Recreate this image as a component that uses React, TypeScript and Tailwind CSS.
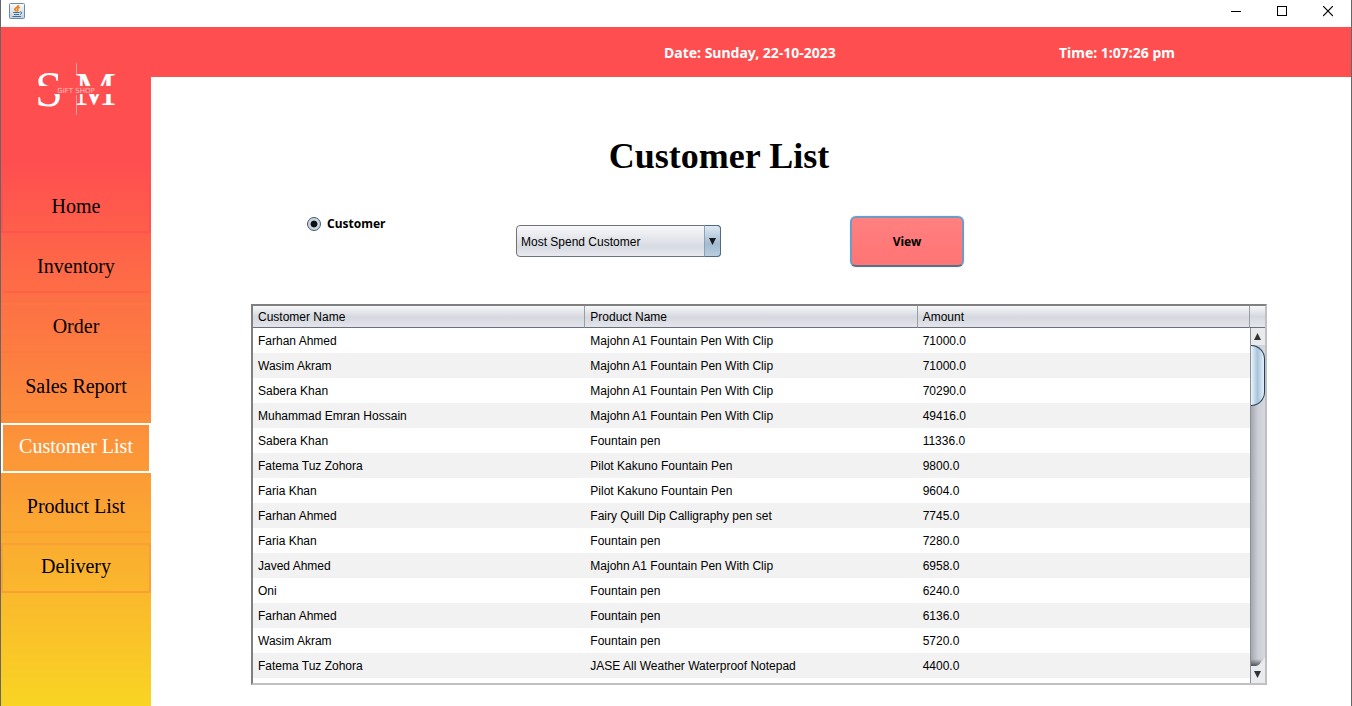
import React from "react";

const NAV = [
  { label: "Home", border: "border-[#ff4e50]/70 border-t-transparent" },
  { label: "Inventory", border: "border-transparent border-b-[#ff6249]" },
  { label: "Order", border: "border-transparent border-t-[#ff7542] border-b-[#fe7841]" },
  { label: "Sales Report", border: "border-transparent border-b-[#fd863c]" },
  { label: "Customer List", border: "border-white", active: true },
  { label: "Product List", border: "border-transparent border-b-[#fc9f33]" },
  { label: "Delivery", border: "border-[#f8a033]" },
];

const ROWS: [string, string, string][] = [
  ["Farhan Ahmed", "Majohn A1 Fountain Pen With Clip", "71000.0"],
  ["Wasim Akram", "Majohn A1 Fountain Pen With Clip", "71000.0"],
  ["Sabera Khan", "Majohn A1 Fountain Pen With Clip", "70290.0"],
  ["Muhammad Emran Hossain", "Majohn A1 Fountain Pen With Clip", "49416.0"],
  ["Sabera Khan", "Fountain pen", "11336.0"],
  ["Fatema Tuz Zohora", "Pilot Kakuno Fountain Pen", "9800.0"],
  ["Faria Khan", "Pilot Kakuno Fountain Pen", "9604.0"],
  ["Farhan Ahmed", "Fairy Quill Dip Calligraphy pen set", "7745.0"],
  ["Faria Khan", "Fountain pen", "7280.0"],
  ["Javed Ahmed", "Majohn A1 Fountain Pen With Clip", "6958.0"],
  ["Oni", "Fountain pen", "6240.0"],
  ["Farhan Ahmed", "Fountain pen", "6136.0"],
  ["Wasim Akram", "Fountain pen", "5720.0"],
  ["Fatema Tuz Zohora", "JASE All Weather Waterproof Notepad", "4400.0"],
];

function JavaIcon() {
  return (
    <svg width="16" height="16" viewBox="0 0 16 16" aria-hidden="true">
      <defs>
        <linearGradient id="tile" x1="0" y1="0" x2="0" y2="1">
          <stop offset="0" stopColor="#fafcfd" />
          <stop offset="1" stopColor="#c3d2de" />
        </linearGradient>
      </defs>
      <rect x="0.5" y="0.5" width="15" height="15" rx="1" fill="url(#tile)" stroke="#6c8ba5" />
      <path d="M9.500 2C9.800 4 5.600 4.600 5.800 6.300C5.900 7.300 7.200 7.600 7.200 8.600M10.800 4.300C8.500 5 8 5.800 8.600 6.600C9 7.300 8.700 8 8.200 8.500" fill="none" stroke="#ee7f1b" strokeWidth="1.600" />
      <path d="M4.200 9.500H10.500M5 11.500H10M3.500 13.500H12M11 9C13.500 8.400 13.200 11 10.800 11.500" fill="none" stroke="#3f6d94" strokeWidth="1" />
    </svg>
  );
}

function Logo() {
  return (
    <svg width="84" height="56" viewBox="0 0 84 56" role="img" aria-label="SM Gift Shop">
      <g fill="#fff" fontFamily="'Liberation Serif', serif">
        <text x="1" y="44" fontSize="50">S</text>
        <text x="41" y="43" fontSize="46">M</text>
      </g>
      <rect x="0" y="24" width="84" height="8" fill="#ff4e50" />
      <path d="M42.500 1V12M42.500 33V53" stroke="#ff9a9b" strokeWidth="1" />
      <text x="42" y="31" fontSize="7" textAnchor="middle" fill="#ffc4c5" fontFamily="'DejaVu Sans', sans-serif">
        GIFT SHOP
      </text>
    </svg>
  );
}

function TitleBar() {
  const control = "flex h-[23px] w-[46px] items-center justify-center";
  return (
    <header className="flex h-[27px] items-start justify-between bg-white">
      <div className="pt-[3px] pl-2">
        <JavaIcon />
      </div>
      <div className="flex">
        <button type="button" aria-label="Minimize" className={control}>
          <svg width="10" height="11" viewBox="0 0 10 11"><path d="M0 5.500H10" stroke="#000" /></svg>
        </button>
        <button type="button" aria-label="Maximize" className={control}>
          <svg width="10" height="11" viewBox="0 0 10 11"><rect x="0.5" y="0.5" width="9" height="9" fill="none" stroke="#000" /></svg>
        </button>
        <button type="button" aria-label="Close" className={control}>
          <svg width="10" height="11" viewBox="0 0 10 11"><path d="M0 0L10 10M10 0L0 10" stroke="#000" strokeWidth="1.200" /></svg>
        </button>
      </div>
    </header>
  );
}

function Sidebar() {
  return (
    <aside className="flex w-[150px] shrink-0 flex-col bg-linear-to-b/srgb from-[#ff4e50] from-20% to-[#f9d423]">
      <div className="flex h-[156px] items-start justify-center pt-[35px]">
        <Logo />
      </div>
      <nav className="flex flex-col gap-[10px]">
        {NAV.map((item) => (
          <a
            key={item.label}
            href="#"
            aria-current={item.active ? "page" : undefined}
            className={`flex h-[50px] items-center justify-center border-2 pb-1 font-['Liberation_Serif',serif] text-xl leading-6 ${item.border} ${item.active ? "text-white" : "text-black"}`}
          >
            {item.label}
          </a>
        ))}
      </nav>
    </aside>
  );
}

function ScrollBar() {
  return (
    <div aria-hidden="true" className="flex w-[15px] shrink-0 flex-col">
      <div className="h-[22px] shrink-0 border-b border-[#6a7080] bg-linear-to-b from-[#f7f8fa] via-[#d5d8df] to-[#e4e6ec]" />
      <div className="flex min-h-0 flex-1 flex-col border-l border-[#8b8e94] bg-linear-to-r from-[#a5a8ae] via-[#cdcfd6] to-[#d6d8df]">
        <svg className="h-[17px] w-full shrink-0 bg-[#e9eaee]" viewBox="0 0 14 17">
          <path d="M3 12H10L6.500 5Z" fill="#333" />
        </svg>
        <div className="h-[61px] shrink-0 rounded-r-[14px] border border-l-0 border-[#24405a] bg-linear-to-r from-[#edf4fa] via-[#a9c4db] to-[#e2f1fb]" />
        <div className="flex-1" />
        <svg className="h-[26px] w-full shrink-0" viewBox="0 0 14 26">
          <defs>
            <linearGradient id="shade" x1="0" y1="0" x2="0" y2="1">
              <stop offset="0" stopColor="#50545a" stopOpacity="0" />
              <stop offset="1" stopColor="#50545a" />
            </linearGradient>
          </defs>
          <path d="M0 2H11L8 9H0Z" fill="url(#shade)" />
          <path d="M0 9H5Q10 8 14 0V26H0Z" fill="#e9ebee" />
          <path d="M3 14H10L6.500 21Z" fill="#333" />
        </svg>
      </div>
    </div>
  );
}

function CustomerTable() {
  const th = "border-r border-b border-r-[#9a9da4] border-b-[#6a7080] pl-[5px] text-left font-normal";
  return (
    <div className="flex min-h-0 flex-1 overflow-hidden border-2 border-[#808080] border-r-[#c0c0c0] border-b-[#c0c0c0] bg-white">
      <div className="min-w-0 flex-1 overflow-hidden">
        <table className="w-full table-fixed border-separate border-spacing-0 font-['Liberation_Sans',Arial,sans-serif] text-xs text-black">
          <thead>
            <tr className="h-[22px] bg-linear-to-b from-[#f7f8fa] via-[#d5d8df] to-[#e4e6ec]">
              <th className={th}>Customer Name</th>
              <th className={th}>Product Name</th>
              <th className={th}>Amount</th>
            </tr>
          </thead>
          <tbody>
            {ROWS.map((row, i) => (
              <tr key={i} className="h-[25px] even:bg-[#f2f2f2]">
                {row.map((cell, j) => (
                  <td key={j} className="p-0 pl-[5px] whitespace-nowrap">{cell}</td>
                ))}
              </tr>
            ))}
          </tbody>
        </table>
      </div>
      <ScrollBar />
    </div>
  );
}

function Filters() {
  return (
    <form className="grid grid-cols-[265px_334px_1fr] items-start" onSubmit={(e) => e.preventDefault()}>
      <label className="flex items-center gap-[6px] pl-14 font-['Noto_Sans',sans-serif] text-xs leading-4 font-bold text-black">
        <input
          type="radio"
          name="list"
          defaultChecked
          className="size-[14px] appearance-none rounded-full border border-[#3d5670] bg-radial from-[#111] from-35% to-[#c9d6e2] to-45%"
        />
        Customer
      </label>
      <div className="relative mt-[9px] w-[205px]">
        <select
          aria-label="Customer filter"
          className="block h-8 w-full appearance-none rounded border border-[#6f737b] bg-linear-to-b from-[#f8f8fa] via-[#d8dbe2] via-70% to-[#e8eaef] pt-px pl-1 font-['Liberation_Sans',Arial,sans-serif] text-xs text-black"
        >
          <option>Most Spend Customer</option>
        </select>
        <span className="pointer-events-none absolute inset-y-0 right-0 flex w-[17px] items-center justify-center rounded-r border border-[#4f6a84] border-l-[#8ba3b9] bg-linear-to-b from-[#dfe9f2] via-[#a3bbd0] via-60% to-[#b9cfe0]">
          <svg width="7" height="7" viewBox="0 0 7 7" aria-hidden="true"><path d="M0 0H7L3.500 7Z" fill="#1a1a1a" /></svg>
        </span>
      </div>
      <button
        type="submit"
        className="h-[51px] w-[114px] rounded-md border-2 border-[#6f9cc4] border-b-[#5a7088] bg-linear-to-b from-[#ff8080] to-[#ff7474] font-['Noto_Sans',sans-serif] text-xs font-bold text-black shadow-[0_0_1px_#6f9cc4]"
      >
        View
      </button>
    </form>
  );
}

export default function App() {
  return (
    <div className="flex h-screen flex-col overflow-hidden border-x border-[#666] bg-white">
      <TitleBar />
      <div className="flex min-h-0 flex-1">
        <Sidebar />
        <div className="flex min-w-0 flex-1 flex-col">
          <div className="grid h-[50px] shrink-0 grid-cols-[395px_1fr] items-center bg-[#ff4e50] pt-px pl-[513px] font-['Noto_Sans',sans-serif] text-sm font-bold text-white">
            <span>Date: Sunday, 22-10-2023</span>
            <span>Time: 1:07:26 pm</span>
          </div>
          <main className="flex min-h-0 flex-1 flex-col pt-[59px] pr-[84px] pb-[21px] pl-[100px]">
            <h1 className="pr-20 text-center font-['Liberation_Serif',serif] text-4xl leading-10 font-bold text-black">
              Customer List
            </h1>
            <div className="pt-10 pb-[37px]">
              <Filters />
            </div>
            <CustomerTable />
          </main>
        </div>
      </div>
    </div>
  );
}
